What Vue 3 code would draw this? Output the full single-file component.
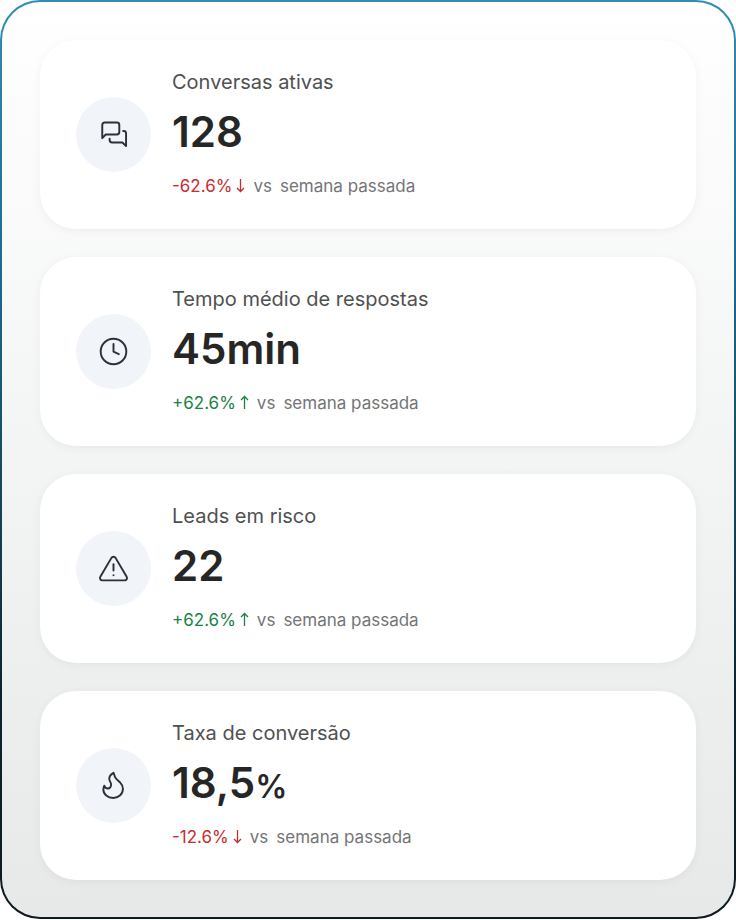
<template>
  <main class="panel">
    <section v-for="item in stats" :key="item.label" class="card">
      <div class="badge">
        <svg class="icon" viewBox="0 0 24 24" aria-hidden="true">
          <path v-for="d in icons[item.icon]" :key="d" :d="d" />
        </svg>
      </div>

      <div class="info">
        <h2 class="label">{{ item.label }}</h2>
        <p class="value">{{ item.value }}<span v-if="item.unit" class="unit">{{ item.unit }}</span></p>
        <p class="compare">
          <span :class="['delta', item.up ? 'up' : 'down']">
            {{ item.delta }}
            <svg class="arrow" viewBox="0 0 9 15" aria-hidden="true">
              <path :d="item.up ? 'M4.5 14V1.5M1 5l3.5-3.5L8 5' : 'M4.5 1v12.5M1 10l3.5 3.5L8 10'" />
            </svg>
          </span>
          <span>vs</span>
          <span>semana passada</span>
        </p>
      </div>
    </section>
  </main>
</template>

<script setup>
const stats = [
  { label: 'Conversas ativas', value: '128', delta: '-62.6%', up: false, icon: 'chat' },
  { label: 'Tempo médio de respostas', value: '45min', delta: '+62.6%', up: true, icon: 'clock' },
  { label: 'Leads em risco', value: '22', delta: '+62.6%', up: true, icon: 'alert' },
  { label: 'Taxa de conversão', value: '18,5', unit: '%', delta: '-12.6%', up: false, icon: 'flame' },
]

/* outline paths on a 24px grid */
const icons = {
  chat: [
    'M16.8 10a2 2 0 0 1-2 2H5.6L2.7 15V4.1a2 2 0 0 1 2-2h10.1a2 2 0 0 1 2 2z',
    'M20 9.1h.4a2 2 0 0 1 2 2v10.5l-3-3h-8.6a2 2 0 0 1-2-2v-1.2',
  ],
  clock: ['M12 1.4a10.6 10.6 0 1 0 0 21.2a10.6 10.6 0 1 0 0-21.2', 'M12 5.8v6.4l4.4 2'],
  alert: [
    'M13.7 3.2 22.9 18.9a1.9 1.9 0 0 1-1.7 2.9H2.8a1.9 1.9 0 0 1-1.7-2.9L10.3 3.2a2 2 0 0 1 3.4 0z',
    'M12 8.4v5.2',
    'M12 17.6h.01',
  ],
  flame: [
    'M12 1.5C9.6 2.9 8.3 4.8 8.5 6.8c.2 1.6 1.4 2.5 1.5 4.2.1 2.1-1 3.5-2.7 3.5-1.5 0-2.5-.8-2.9-2.3-.5 1-.8 2.1-.8 3.1 0 4 3.6 7 8.2 7s8-3.3 8-7.6c0-2.2-1-3.9-2.4-5.3-1.6-1.6-3.3-2.6-4.1-4.4-.5-1.1-.8-2.3-1.3-3.5z',
  ],
}
</script>

<style>
body {
  margin: 0;
  background: #fff;
}
</style>

<style scoped>
.panel {
  box-sizing: border-box;
  display: flex;
  flex-direction: column;
  gap: 28px;
  padding: 38px 38px 37px;
  border: 2px solid transparent;
  border-radius: 40px;
  background:
    linear-gradient(180deg, #fff 0%, #e7e9e9 100%) padding-box,
    linear-gradient(180deg, #348bb5 0%, #1f6f9b 25%, #17495c 52%, #0c2430 75%, #0b1b1f 100%) border-box;
  font-family: Inter, "Liberation Sans", sans-serif;
}

.card {
  box-sizing: border-box;
  display: flex;
  align-items: center;
  gap: 21px;
  min-height: 189px;
  padding: 24px 36px;
  border-radius: 36px;
  background: #fff;
  box-shadow: 0 2px 10px rgba(0, 0, 0, 0.05);
}

.badge {
  display: flex;
  flex: none;
  align-items: center;
  justify-content: center;
  width: 75px;
  height: 75px;
  border-radius: 50%;
  background: #f1f5fa;
}

.icon {
  width: 29px;
  height: 29px;
  overflow: visible;
  fill: none;
  stroke: #2b303b;
  stroke-width: 1.6;
  stroke-linecap: round;
  stroke-linejoin: round;
}

.info {
  padding-bottom: 4px;
}

.label,
.value,
.compare {
  margin: 0;
}

.label {
  color: #505052;
  font-size: 20px;
  font-weight: 400;
  line-height: 32px;
}

.value {
  margin-top: 6px;
  color: #262626;
  font-size: 42px;
  font-weight: 600;
  line-height: 56px;
}

.unit {
  font-size: 32px;
  line-height: 1;
}

.compare {
  display: flex;
  gap: 8px;
  align-items: center;
  margin-top: 12px;
  color: #747476;
  font-size: 17px;
  line-height: 28px;
}

.delta {
  display: flex;
  gap: 4px;
  align-items: center;
}

.up {
  color: #1c8146;
}

.down {
  color: #c72c2f;
}

.arrow {
  width: 9px;
  height: 15px;
  fill: none;
  stroke: currentColor;
  stroke-width: 1.3;
}
</style>
